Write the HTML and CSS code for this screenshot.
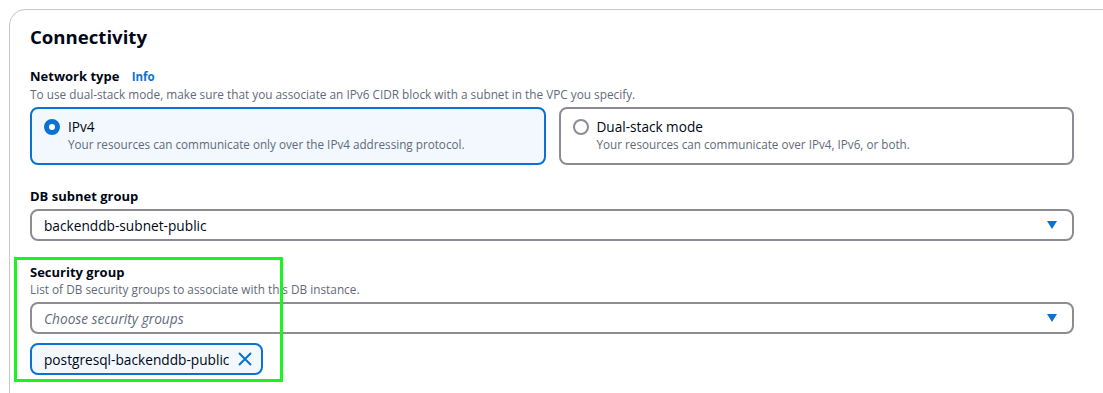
FILE: index.html
```html
<!DOCTYPE html>
<html lang="en">
  <head>
    <meta charset="UTF-8" />
    <meta name="viewport" content="width=device-width, initial-scale=1.0" />
    <title>Connectivity</title>
    <link rel="stylesheet" href="styles.css">
  </head>
  <body>
    <div class="panel">
      <h2 class="panel-title">Connectivity</h2>

      <div class="field">
        <div class="label">Network type <a class="info" href="#">Info</a></div>
        <div class="hint">To use dual-stack mode, make sure that you associate an IPv6 CIDR block with a subnet in the VPC you specify.</div>
        <div class="tiles">
          <label class="tile checked">
            <span class="radio"></span>
            <span class="tile-text">
              <span class="tile-title">IPv4</span>
              <span class="tile-desc">Your resources can communicate only over the IPv4 addressing protocol.</span>
            </span>
          </label>
          <label class="tile">
            <span class="radio"></span>
            <span class="tile-text">
              <span class="tile-title">Dual-stack mode</span>
              <span class="tile-desc">Your resources can communicate over IPv4, IPv6, or both.</span>
            </span>
          </label>
        </div>
      </div>

      <div class="field">
        <div class="label">DB subnet group</div>
        <div class="select">
          <span class="value">backenddb-subnet-public</span>
          <svg class="caret" width="10" height="8" viewBox="0 0 10 8"><path d="M0 0h10L5 8z" fill="#0972d3"/></svg>
        </div>
      </div>

      <div class="field security">
        <div class="label">Security group</div>
        <div class="hint">List of DB security groups to associate with this DB instance.</div>
        <div class="select">
          <span class="value placeholder">Choose security groups</span>
          <svg class="caret" width="10" height="8" viewBox="0 0 10 8"><path d="M0 0h10L5 8z" fill="#0972d3"/></svg>
        </div>
        <div class="tokens">
          <span class="token">postgresql-backenddb-public
            <svg class="dismiss" width="14" height="14" viewBox="0 0 14 14"><path d="M1 1l12 12M13 1L1 13" stroke="#0972d3" stroke-width="2" fill="none"/></svg>
          </span>
        </div>
        <div class="highlight"></div>
      </div>
    </div>
  </body>
</html>
```

FILE: styles.css
```css
body {
  margin: 0;
  padding: 9px 0 0 9px;
  background: #fff;
  font-family: "Open Sans", "Noto Sans", sans-serif;
  color: #000716;
  overflow: hidden;
}
.panel {
  width: 1120px;
  height: 420px;
  border: 1px solid #c6c6cd;
  border-radius: 16px;
  padding: 15px 0 0 20px;
  box-sizing: border-box;
}
.panel-title {
  margin: 0 0 18px;
  font-size: 18.6px;
  line-height: 24px;
  font-weight: 700;
}
.field {
  width: 1044px;
  margin-bottom: 22px;
}
.label {
  font-size: 13px;
  font-weight: 700;
  line-height: 18px;
}
.label .info {
  margin-left: 9px;
  font-size: 11.5px;
  color: #0972d3;
  text-decoration: none;
}
.hint {
  font-size: 11.8px;
  line-height: 17px;
  color: #5f6b7a;
  margin-bottom: 4px;
}
.tiles {
  display: flex;
  gap: 13px;
}
.tile {
  flex: 1;
  display: flex;
  gap: 8px;
  height: 58px;
  box-sizing: border-box;
  padding: 8px 12px;
  border: 2px solid #8c8c94;
  border-radius: 8px;
}
.tile.checked {
  border-color: #0972d3;
  background: #f2f8fd;
}
.radio {
  width: 16px;
  height: 16px;
  margin-top: 2px;
  border-radius: 50%;
  border: 2px solid #8c8c94;
  box-sizing: border-box;
  flex: none;
}
.tile.checked .radio {
  border: 5px solid #0972d3;
  background: #fff;
}
.tile-text {
  display: flex;
  flex-direction: column;
}
.tile-title {
  font-size: 13.6px;
  line-height: 19px;
}
.tile-desc {
  font-size: 11.7px;
  line-height: 17px;
  color: #5f6b7a;
}
.select {
  display: flex;
  align-items: center;
  justify-content: space-between;
  height: 32px;
  margin-top: 4px;
  box-sizing: border-box;
  padding: 0 15px 0 12px;
  border: 2px solid #8c8c94;
  border-radius: 8px;
  font-size: 13.7px;
}
.placeholder {
  color: #5f6b7a;
  font-style: italic;
}
.security {
  position: relative;
  margin-top: 22px;
}
.security .hint {
  margin-bottom: 2px;
}
.tokens {
  margin-top: 9px;
  display: flex;
}
.token {
  display: flex;
  align-items: center;
  gap: 9px;
  height: 32px;
  box-sizing: border-box;
  padding: 0 9px 0 12px;
  border: 2px solid #0972d3;
  border-radius: 8px;
  background: #f2f8fd;
  font-size: 13.7px;
}
.highlight {
  position: absolute;
  left: -16px;
  top: -6px;
  width: 269px;
  height: 125px;
  border: 3px solid #1cf51c;
  box-sizing: border-box;
}
```
